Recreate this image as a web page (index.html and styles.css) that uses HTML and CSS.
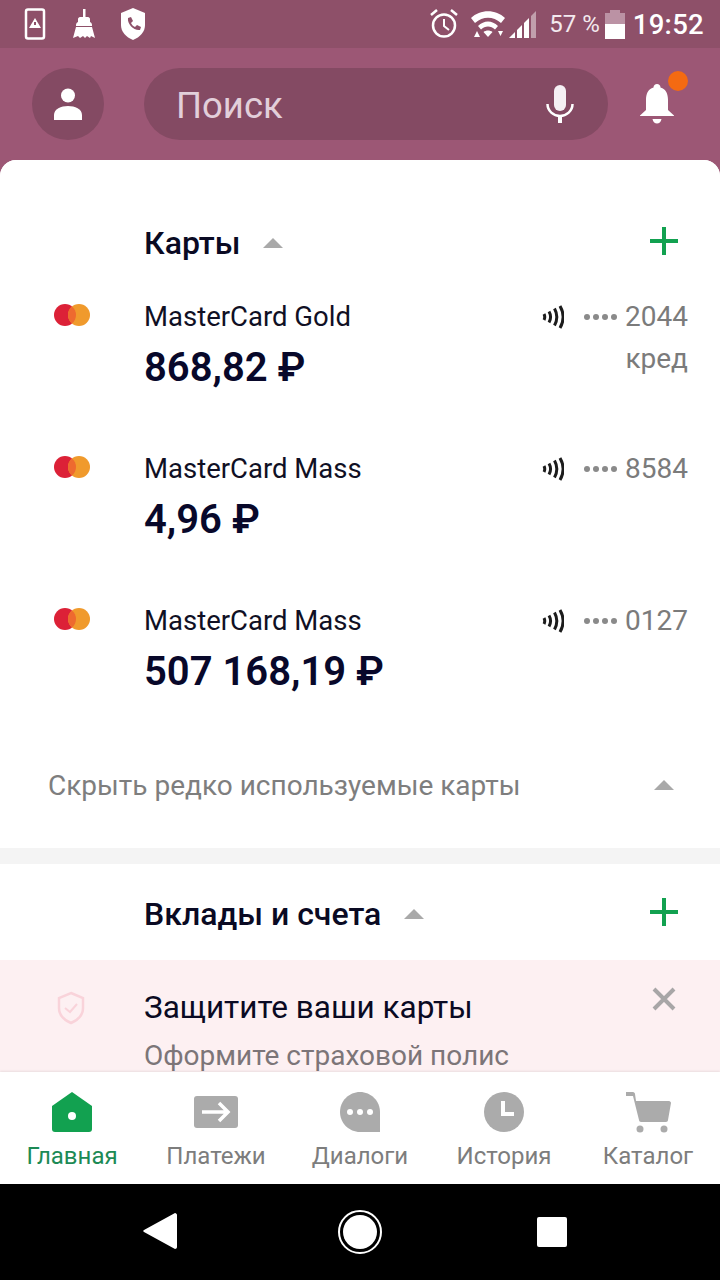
FILE: index.html
```html
<!DOCTYPE html>
<html>
<head>
  <title>Главная</title>
  <link rel="stylesheet" href="styles.css">
</head>
<body>
  <div class="phone">
    <div class="status">
      <div class="status-left">
        <svg width="24" height="32" viewBox="0 0 24 32"><rect x="2" y="1.500" width="18" height="29" rx="2" fill="none" stroke="#fff" stroke-width="2.500"/><path d="M11 10l6 10H5z" fill="#fff"/><rect x="10" y="14" width="2" height="3" fill="#8e5069"/></svg>
        <svg width="24" height="32" viewBox="0 0 24 32"><path d="M11 1h2.500v8H16c1 0 2 1 2 2v3c2 1 2 2 2 4H4c0-2 0-3 2-4v-3c0-1 1-2 2-2h3zM4 19h16l3 11-4-2-1 2-3-2-2 2-2-2-3 2-2-2-5 2z" fill="#fff"/></svg>
        <svg width="26" height="32" viewBox="0 0 26 32"><path d="M13 0l12 5v12c0 7-5 12-12 15C6 29 1 24 1 17V5z" fill="#fff"/><path d="M8 10l3-1 2 4-2 2c1 2 2 3 4 4l2-2 4 2-1 3c-6 1-13-6-12-12z" fill="#8e5069"/></svg>
      </div>
      <div class="status-right">
        <svg class="s-alarm" width="30" height="30" viewBox="0 0 30 30"><circle cx="15" cy="16.500" r="11" fill="none" stroke="#fff" stroke-width="2.500"/><path d="M15 10v7l5 4" fill="none" stroke="#fff" stroke-width="2"/><path d="M2 6l6-5M28 6l-6-5" stroke="#fff" stroke-width="2.500"/></svg>
        <svg class="s-wifi" width="34" height="30" viewBox="0 0 34 30"><path d="M0 9C9 0 25 0 34 9l-4 5C22 7 12 7 4 14z" fill="#fff"/><path d="M7 17c6-6 14-6 20 0l-3 3.500c-4-4-10-4-14 0z" fill="#fff"/><path d="M12.500 23c2.500-2 6.500-2 9 0L17 28z" fill="#fff"/><path d="M3 28l3-6 3 6zM27 22h5l-2.500 5z" fill="#fff"/></svg>
        <svg class="s-signal" width="28" height="30" viewBox="0 0 28 30"><path d="M0 29l6-6v6z" fill="#fff"/><path d="M8 29v-8l5-5v13z" fill="#fff"/><path d="M15 29V14l5-5v20z" fill="#fff"/><path d="M22 29V7l5-5v27z" fill="#fff" opacity=".45"/></svg>
        <span class="s-pct">57 %</span>
        <div class="battery"><div class="battery-cap"></div><div class="battery-body"><div class="battery-fill"></div></div></div>
        <span class="s-time">19:52</span>
      </div>
    </div>

    <div class="topbar">
      <div class="avatar">
        <svg width="28" height="32" viewBox="0 0 28 32"><circle cx="14" cy="7.500" r="7" fill="#fff"/><path d="M0 32v-5c0-6 7-9 14-9s14 3 14 9v5z" fill="#fff"/></svg>
      </div>
      <div class="search">
        <span class="search-text">Поиск</span>
        <svg width="28" height="38" viewBox="0 0 28 38"><rect x="8" y="0" width="12" height="26" rx="6" fill="#f5f0f4"/><path d="M1.500 19c0 7 6 12 12.500 12s12.500-5 12.500-12" fill="none" stroke="#fff" stroke-width="2.500"/><rect x="12" y="30" width="4" height="8" fill="#fff"/></svg>
      </div>
      <div class="bell">
        <svg width="34" height="40" viewBox="0 0 34 40"><path d="M17 0c2 0 3.500 1.500 3.500 3.500C26 5 28 10 28 16v10l6 5.500V32H0v-.5L6 26V16C6 10 8 5 13.500 3.500 13.500 1.500 15 0 17 0z" fill="#fff"/><path d="M12.500 35h9c-.5 3-2.500 4.500-4.500 4.500S13 38 12.500 35z" fill="#fff"/></svg>
        <span class="bell-dot"></span>
      </div>
    </div>

    <div class="main">
      <section class="cards">
        <div class="sec-head">
          <h2>Карты</h2>
          <span class="tri"></span>
          <span class="plus"></span>
        </div>

        <div class="card">
          <svg class="mc" width="36" height="22" viewBox="0 0 36 22"><circle cx="11" cy="11" r="11" fill="#dc2137"/><circle cx="25" cy="11" r="11" fill="#f09a2c"/><path d="M18 2.510A11 11 0 0 1 18 19.490A11 11 0 0 1 18 2.510z" fill="#ee6a2f"/></svg>
          <div class="card-info">
            <div class="card-name">MasterCard Gold</div>
            <div class="card-sum">868,82 ₽</div>
          </div>
          <div class="card-side">
            <div class="card-num">
              <svg class="nfc" width="22" height="24" viewBox="0 0 22 24"><path d="M2 9c1 2 1 4 0 6M7 6.500c2 3.500 2 7.500 0 11M12.500 3.500c3 5.500 3 11.500 0 17M18 1c4 7 4 15 0 22" fill="none" stroke="#1c1c1c" stroke-width="3"/></svg>
              <span class="dots"><i></i><i></i><i></i><i></i></span>
              <span>2044</span>
            </div>
            <div class="card-type">кред</div>
          </div>
        </div>

        <div class="card">
          <svg class="mc" width="36" height="22" viewBox="0 0 36 22"><circle cx="11" cy="11" r="11" fill="#dc2137"/><circle cx="25" cy="11" r="11" fill="#f09a2c"/><path d="M18 2.510A11 11 0 0 1 18 19.490A11 11 0 0 1 18 2.510z" fill="#ee6a2f"/></svg>
          <div class="card-info">
            <div class="card-name">MasterCard Mass</div>
            <div class="card-sum">4,96 ₽</div>
          </div>
          <div class="card-side">
            <div class="card-num">
              <svg class="nfc" width="22" height="24" viewBox="0 0 22 24"><path d="M2 9c1 2 1 4 0 6M7 6.500c2 3.500 2 7.500 0 11M12.500 3.500c3 5.500 3 11.500 0 17M18 1c4 7 4 15 0 22" fill="none" stroke="#1c1c1c" stroke-width="3"/></svg>
              <span class="dots"><i></i><i></i><i></i><i></i></span>
              <span>8584</span>
            </div>
          </div>
        </div>

        <div class="card">
          <svg class="mc" width="36" height="22" viewBox="0 0 36 22"><circle cx="11" cy="11" r="11" fill="#dc2137"/><circle cx="25" cy="11" r="11" fill="#f09a2c"/><path d="M18 2.510A11 11 0 0 1 18 19.490A11 11 0 0 1 18 2.510z" fill="#ee6a2f"/></svg>
          <div class="card-info">
            <div class="card-name">MasterCard Mass</div>
            <div class="card-sum">507 168,19 ₽</div>
          </div>
          <div class="card-side">
            <div class="card-num">
              <svg class="nfc" width="22" height="24" viewBox="0 0 22 24"><path d="M2 9c1 2 1 4 0 6M7 6.500c2 3.500 2 7.500 0 11M12.500 3.500c3 5.500 3 11.500 0 17M18 1c4 7 4 15 0 22" fill="none" stroke="#1c1c1c" stroke-width="3"/></svg>
              <span class="dots"><i></i><i></i><i></i><i></i></span>
              <span>0127</span>
            </div>
          </div>
        </div>

        <div class="hide-row">
          <span>Скрыть редко используемые карты</span>
          <span class="tri"></span>
        </div>
      </section>

      <section class="deposits">
        <div class="sec-head">
          <h2>Вклады и счета</h2>
          <span class="tri"></span>
          <span class="plus"></span>
        </div>
        <div class="promo">
          <svg class="promo-icon" width="30" height="34" viewBox="0 0 30 34"><path d="M15 2l12 5v10c0 7-5 12-12 15C8 29 3 24 3 17V7z" fill="none" stroke="#f9d3da" stroke-width="2.500"/><path d="M9 17l5 4 7-8" fill="none" stroke="#f9d3da" stroke-width="2"/></svg>
          <div class="promo-text">
            <div class="promo-title">Защитите ваши карты</div>
            <div class="promo-sub">Оформите страховой полис</div>
          </div>
          <svg class="promo-close" width="24" height="24" viewBox="0 0 24 24"><path d="M2 2l20 20M22 2L2 22" stroke="#a8a6a7" stroke-width="4"/></svg>
        </div>
      </section>
    </div>

    <nav class="tabs">
      <div class="tab active">
        <svg width="42" height="42" viewBox="0 0 42 42"><path d="M21 1l20 14v23c0 2-1 3-3 3H4c-2 0-3-1-3-3V15z" fill="#12a150"/><circle cx="21" cy="25" r="4" fill="#fff"/></svg>
        <span>Главная</span>
      </div>
      <div class="tab">
        <svg width="44" height="42" viewBox="0 0 44 42"><rect x="0" y="5" width="44" height="32" rx="3" fill="#ababab"/><path d="M8 21h26M25 12l9 9-9 9" fill="none" stroke="#fff" stroke-width="3.500"/></svg>
        <span>Платежи</span>
      </div>
      <div class="tab">
        <svg width="40" height="42" viewBox="0 0 40 42"><path d="M20 1c11 0 20 9 20 20v20H20C9 41 0 32 0 21S9 1 20 1z" fill="#ababab"/><circle cx="10" cy="21" r="3" fill="#fff"/><circle cx="20" cy="21" r="3" fill="#fff"/><circle cx="30" cy="21" r="3" fill="#fff"/></svg>
        <span>Диалоги</span>
      </div>
      <div class="tab">
        <svg width="40" height="42" viewBox="0 0 40 42"><circle cx="20" cy="21" r="20" fill="#ababab"/><path d="M19 10v13h11" fill="none" stroke="#fff" stroke-width="4"/></svg>
        <span>История</span>
      </div>
      <div class="tab">
        <svg width="46" height="42" viewBox="0 0 46 42"><path d="M1 1h7c1 0 2 1 2 2l1 7h33c1 0 2 1 2 2l-3 17c0 1-1 2-2 2H16c-1 0-2-1-2-2L8 5H1z" fill="#ababab"/><circle cx="15" cy="38" r="3.500" fill="#ababab"/><circle cx="39" cy="38" r="3.500" fill="#ababab"/></svg>
        <span>Каталог</span>
      </div>
    </nav>

    <div class="softkeys">
      <svg width="34" height="38" viewBox="0 0 34 38"><path d="M32 1c1 0 2 1 2 2v32c0 1-1 2-2 2L1 20c-1-.5-1-1.500 0-2z" fill="#fff"/></svg>
      <div class="home-key"><div></div></div>
      <div class="square-key"></div>
    </div>
  </div>
</body>
</html>
```

FILE: styles.css
```css
* { box-sizing: border-box; }
body { margin: 0; font-family: Roboto, "Noto Sans", sans-serif; background: #fff; }
svg { display: block; flex: none; }

.phone { width: 720px; height: 1280px; display: flex; flex-direction: column; overflow: hidden; background: #9c5775; }

/* status bar */
.status { height: 48px; background: #8e5069; color: #fff; display: flex; justify-content: space-between; align-items: center; padding: 0 16px 0 24px; flex: none; }
.status-left { display: flex; gap: 24px; align-items: center; }
.status-right { display: flex; align-items: center; }
.s-alarm { margin-right: 12px; }
.s-wifi { margin-right: 4px; }
.s-signal { margin-right: 12px; }
.s-pct { font-size: 24px; margin-right: 5px; color: #f3e9ee; }
.s-time { font-size: 27.5px; font-weight: 500; margin-left: 8px; letter-spacing: .3px; }
.battery { width: 20px; display: flex; flex-direction: column; align-items: center; }
.battery-cap { width: 10px; height: 3px; background: #bb92a4; }
.battery-body { width: 20px; height: 26px; background: #bb92a4; display: flex; align-items: flex-end; }
.battery-fill { width: 100%; height: 15px; background: #fff; }

/* top bar */
.topbar { height: 112px; flex: none; padding: 20px 32px 0; display: flex; align-items: flex-start; gap: 40px; }
.avatar { width: 72px; height: 72px; border-radius: 50%; background: #844a63; display: flex; align-items: center; justify-content: center; flex: none; }
.search { width: 464px; height: 72px; border-radius: 36px; background: #844a63; display: flex; align-items: center; justify-content: space-between; padding: 0 34px 0 32px; }
.search-text { font-size: 36.5px; color: #e2cfda; margin-top: 2px; }
.bell { position: relative; margin: 16px 0 0 -8px; }
.bell-dot { position: absolute; top: -13px; left: 28px; width: 20px; height: 20px; border-radius: 50%; background: #f46a12; }

/* main */
.main { height: 912px; flex: none; background: #f4f4f4; border-radius: 16px 16px 0 0; overflow: hidden; }
.cards { background: #fff; height: 688px; padding-top: 56px; }
.cards .sec-head { margin-bottom: 27px; }
.deposits { background: #fff; margin-top: 16px; height: 224px; }

.sec-head { height: 54px; display: flex; align-items: center; padding: 0 32px 0 144px; }
.sec-head h2 { margin: 0; font-size: 32px; font-weight: 500; color: #0a0a23; }
.tri { width: 0; height: 0; border-left: 10px solid transparent; border-right: 10px solid transparent; border-bottom: 10px solid #a9a9a9; margin-left: 23px; }
.plus { margin: -5px 10px 0 auto; width: 28px; height: 28px; background: linear-gradient(#12a150, #12a150) center / 100% 4px no-repeat, linear-gradient(#12a150, #12a150) center / 4px 100% no-repeat; }

/* cards */
.card { height: 152px; display: flex; padding: 0 32px 0 54px; }
.mc { margin-top: 7px; }
.card-info { margin-left: 54px; flex: 1; }
.card-name { font-size: 27.5px; line-height: 40px; color: #101024; }
.card-sum { font-size: 40px; line-height: 50px; font-weight: 600; color: #08082a; margin-top: 6px; }
.card-side { color: #7b7b7b; font-size: 28px; text-align: right; }
.card-num { display: flex; align-items: center; line-height: 40px; }
.nfc { margin-right: 20px; }
.dots { display: flex; gap: 3px; margin-right: 8px; }
.dots i { width: 6px; height: 6px; border-radius: 50%; background: #8a8a8a; }
.card-type { line-height: 44px; }

.hide-row { margin-top: 2px; height: 60px; display: flex; align-items: center; justify-content: space-between; padding: 0 46px 0 48px; font-size: 28px; color: #7e7e7e; }

/* promo */
.deposits .sec-head { height: 96px; padding-top: 4px; }
.promo { background: #fdf0f2; height: 128px; display: flex; padding: 30px 44px 0 56px; }
.promo-icon { margin-top: 1px; }
.promo-text { margin-left: 58px; flex: 1; }
.promo-title { font-size: 31.5px; line-height: 36px; color: #0a0a23; }
.promo-sub { font-size: 28px; line-height: 36px; margin-top: 12px; color: #7c7578; }
.promo-close { margin-top: -3px; }

/* bottom tabs */
.tabs { height: 112px; flex: none; background: #fff; display: flex; box-shadow: 0 -1px 2px rgba(0,0,0,.08); position: relative; }
.tab { width: 144px; display: flex; flex-direction: column; align-items: center; padding-top: 19px; font-size: 24px; color: #7d7d7d; }
.tab span { margin-top: 6px; line-height: 34px; }
.tab.active { color: #1c8a55; }

/* android keys */
.softkeys { height: 96px; flex: none; background: #000; position: relative; }
.softkeys svg { position: absolute; left: 143px; top: 28px; }
.home-key { position: absolute; left: 338px; top: 26px; width: 44px; height: 44px; border: 2px solid #fff; border-radius: 50%; padding: 3px; }
.home-key div { width: 34px; height: 34px; border-radius: 50%; background: #fff; }
.square-key { position: absolute; left: 537px; top: 33px; width: 30px; height: 30px; border-radius: 2px; background: #fff; }
```
